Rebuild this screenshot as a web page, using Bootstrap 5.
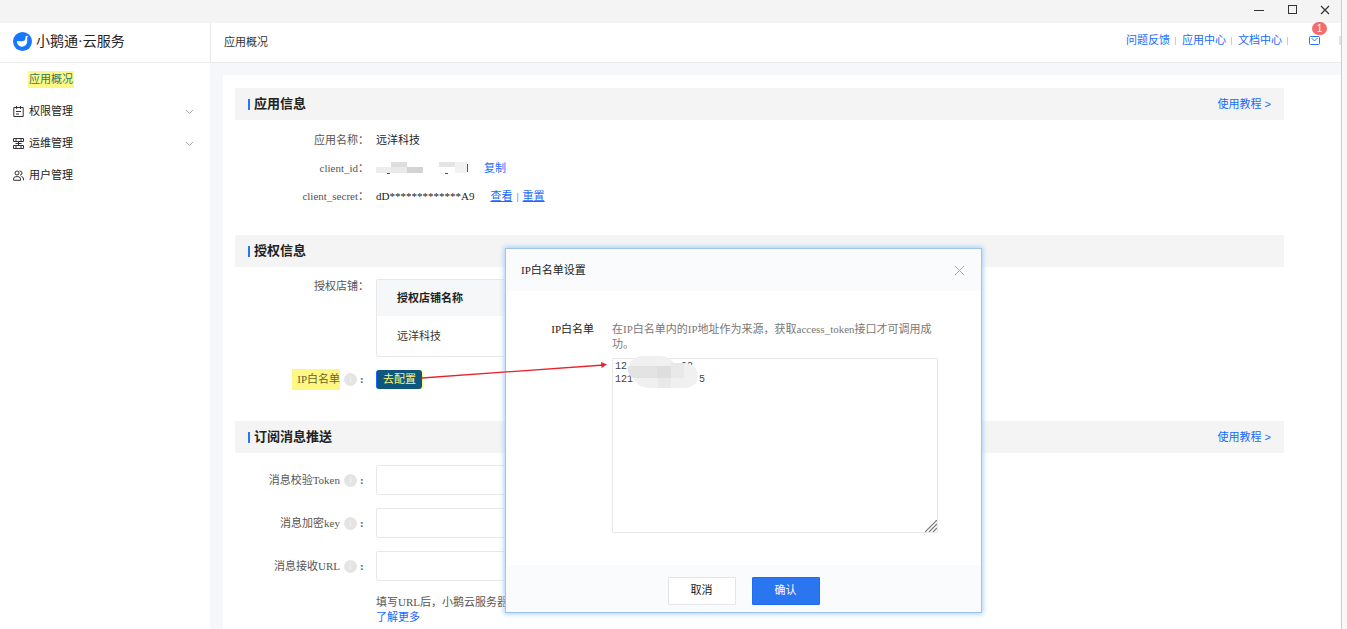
<!DOCTYPE html>
<html lang="zh-CN">
<head>
<meta charset="utf-8">
<meta name="viewport" content="width=device-width, initial-scale=1">
<title>小鹅通·云服务</title>
<link href="https://cdn.jsdelivr.net/npm/bootstrap@5.3.0/dist/css/bootstrap.min.css" rel="stylesheet">
<style>
:root{--blue:#1769ff;--line:#e8e8e8}
body{font:11px/15px "Liberation Serif","Noto Sans CJK SC",serif;color:#333;background:#f8f8f8;overflow:hidden}
a{color:var(--blue);text-decoration:none}
.window{margin-right:5px;border-right:1px solid #ccc;min-height:100vh;background:#f5f7fa}
.titlebar{height:23px;background:#f4f4f4}
.titlebar button{width:33px;height:20px;border:0;background:none;padding:0;line-height:0}
.side{width:210px;background:#fff}
.topbar{height:40px;background:#fff;border-bottom:1px solid #ebebeb}
.brand{width:211px;border-right:1px solid #e8e8e8;padding:0 0 3px 13px;font-size:14px;color:#222}
.crumb{padding-left:13px}
.toplinks{padding-bottom:4px}
.toplinks .sep{width:1px;height:8px;background:#ccc;margin:0 6px 0 5px}
.toplinks .edge{width:2px;height:9px;background:#e4e4e4;margin-left:19px}
.toplinks .mail{margin-left:15px}
.count{position:absolute;left:3px;top:-14px;width:15px;height:13px;border-radius:7px;background:#f56c6c;color:#fff;font:10px/14px "Liberation Sans",sans-serif;text-align:center}
.side a{height:32px;color:#222;padding:1px 16px 0 13px}
.side svg:first-child{margin-right:5px}
.side a.on{color:#2a7a6a;padding-left:28px}
.side mark{background:#fff783;color:inherit;padding:0 1px;line-height:17px}
.panel{background:#fff;margin:12px 0 0 13px;padding:13px 57px 12px 12px}
.bar{height:32px;background:#f4f4f4;padding:0 13px}
.bar a{font-family:"Liberation Sans","Noto Sans CJK SC",sans-serif}
.bar h2{font-size:13px;font-weight:700;line-height:16px;margin:0;color:#222}
.bar h2::before{content:"";width:2px;height:11px;background:#2a75f0;margin-right:4px}
.fields{display:grid;grid-template-columns:134px minmax(0,480px);column-gap:7px;align-items:center}
.fields dt,.fields label,.lbl{text-align:right;font-weight:400;color:#555;white-space:nowrap}
.facts{padding:6px 0 25px;grid-auto-rows:28px;margin:0}
.facts dd{margin:0;color:#222}
.facts a.u{text-decoration:underline}
.facts .bars{color:var(--blue);margin:0 4px}
.grants{padding:12px 0 31px;row-gap:12px}
.push{padding:12px 0 0;row-gap:13px}
.push .note{padding-top:1px;color:#555}
.shops{border:1px solid var(--line);border-radius:2px;border-collapse:separate;border-spacing:0;width:100%}
.shops th{background:#f6f7f9;height:36px;padding:0 20px;color:#222}
.shops td{height:40px;padding:0 20px}
.info{display:inline-block;width:13px;height:13px;border-radius:50%;background:#e4e4e4;color:#f8f8f8;font-size:9px;line-height:13px;text-align:center;vertical-align:1px;margin:0 0 0 4px}
.colon{display:inline-block;width:12px;padding-left:3px;text-align:left;font-weight:700}
.go{height:19px;width:46px;border:0;border-left:1px solid #1769ff;border-radius:3px;background:#10577d;color:#fff783;padding:0;box-shadow:1px 0 #fff783}
.hl{background:#fff783;display:inline-block;line-height:21px;padding-left:5px;color:#66622c}
.push .form-control{height:30px;border:1px solid var(--line);border-radius:2px;font-size:11px}
.dialog{position:absolute;left:505px;top:248px;width:477px;background:#fff;border:1px solid #9cc4f0;box-shadow:0 0 5px 1px #a9cdf8}
.dialog header{height:42px;background:#fafbfc;padding:0 16px 0 15px;color:#222}
.dialog header button{border:0;background:none;padding:0;line-height:0}
.dialog .content{display:grid;grid-template-columns:88px 1fr;column-gap:18px;padding:31px 43px 32px 0}
.dialog .content label{text-align:right;color:#222}
.dialog p{margin:0 0 6px;color:#777}
.dialog textarea{display:block;width:100%;height:175px;border:1px solid var(--line);border-radius:1px;padding:1px 2px;font:10px/13px "Liberation Mono",monospace;color:#444;resize:none}
.smudge{position:absolute;left:15px;top:-2px}
.grip{position:absolute;right:1px;bottom:1px}
.dialog footer{height:47px;background:#fafbfc;gap:16px;padding-top:4px}
.dialog footer button{width:68px;height:28px;border:1px solid #e4e5e8;border-radius:1px;background:#fff;color:#222;font-size:11px}
.dialog footer .ok{background:#2a75f0;border-color:#1f6cf0;color:#fff}
.arrow{position:absolute;left:420px;top:360px;pointer-events:none}
</style>
</head>
<body>
<div class="window position-relative d-flex flex-column">
  <div class="titlebar d-flex justify-content-end">
    <button aria-label="最小化"><svg width="12" height="12"><path d="M1 6.500h10" stroke="#333"/></svg></button>
    <button aria-label="最大化"><svg width="12" height="12"><rect x="2.500" y="1.500" width="8" height="8" fill="none" stroke="#333"/></svg></button>
    <button aria-label="关闭"><svg width="12" height="12"><path d="M2 2l8 8M10 2l-8 8" stroke="#333" stroke-width="1.200"/></svg></button>
  </div>
  <header class="topbar d-flex">
    <div class="brand d-flex align-items-center"><svg width="19" height="19" viewBox="0 0 19 19"><circle cx="9.500" cy="9.500" r="9.500" fill="#1677ff"/><path d="M3.800 9.300h4.700q4 0 4-3.500V5q0-1.200 1.200-1.200l1.500.7-1 .9v4.200a5.200 5.200 0 0 1-10.400-.3z" fill="#fff"/></svg><span class="ps-1">小鹅通·云服务</span></div>
    <div class="crumb d-flex align-items-center flex-grow-1">应用概况</div>
    <nav class="toplinks d-flex align-items-center">
      <a href="#">问题反馈</a><span class="sep"></span><a href="#">应用中心</a><span class="sep"></span><a href="#">文档中心</a><span class="sep"></span>
      <a href="#" class="mail position-relative lh-1" aria-label="消息"><svg class="d-block" width="11" height="9" viewBox="0 0 11 9" fill="none" stroke="#2a75f0"><rect x=".5" y=".5" width="10" height="8" rx="1"/><path d="M2.500 2l3 3 3-3"/></svg><span class="count">1</span></a><span class="edge"></span>
    </nav>
  </header>
  <div class="d-flex flex-grow-1">
    <nav class="side flex-shrink-0">
      <a class="on d-flex align-items-center" href="#"><mark>应用概况</mark></a>
      <a class="d-flex align-items-center" href="#"><svg width="11" height="11" viewBox="0 0 11 11" fill="none" stroke="#333"><path d="M3 1.500H.8v9h9.400v-9H8M4 1.500h3M3.500 0v3M7.500 0v3M3 5.500h5M3 8h3"/></svg><span class="flex-grow-1">权限管理</span><svg width="9" height="6" fill="none" stroke="#aaa"><path d="M1 1l3.500 3.500L8 1"/></svg></a>
      <a class="d-flex align-items-center" href="#"><svg width="11" height="11" viewBox="0 0 11 11" fill="none" stroke="#333"><path d="M.5.5h10v3H.5zM.5 7.500h10v3H.5zM2.500 5.500h6M5.500 3.500v4M2 2h2M7 2h2M2 9h2M7 9h2"/></svg><span class="flex-grow-1">运维管理</span><svg width="9" height="6" fill="none" stroke="#aaa"><path d="M1 1l3.500 3.500L8 1"/></svg></a>
      <a class="d-flex align-items-center" href="#"><svg width="11" height="11" viewBox="0 0 11 11" fill="none" stroke="#333"><circle cx="4" cy="3" r="2"/><path d="M.6 10.300V9q0-2.300 2.300-2.300h2.300q2.300 0 2.300 2.300v1.300zM6.500 1q2.500 0 2.500 2T7 5.200M8.500 6.500q2 .3 2 2.500v1.300"/></svg><span>用户管理</span></a>
    </nav>
    <main class="flex-grow-1 d-flex flex-column">
      <div class="panel flex-grow-1">
        <section>
          <div class="bar d-flex align-items-center justify-content-between"><h2 class="d-flex align-items-center">应用信息</h2><a href="#">使用教程 &gt;</a></div>
          <dl class="fields facts">
            <dt>应用名称：</dt><dd>远洋科技</dd>
            <dt>client_id：</dt><dd class="d-flex align-items-center"><svg width="92" height="13"><path fill="#ededed" d="M0 5h15v6H0z"/><path fill="#dedede" d="M15 0h16v5H15z"/><path fill="#e9e9e9" d="M15 5h16v6H15z"/><path fill="#d3d3d5" d="M31 5h16v6H31z"/><path fill="#e4e4e4" d="M63 0h16v5H63z"/><path fill="#f2f2f2" d="M79 0h12v11H79z"/><path stroke="#555" d="M11 11.500h3M69 11.500h3M91.500 2v8"/></svg><a class="ps-3" href="#">复制</a></dd>
            <dt>client_secret：</dt><dd>dD*************A9<a class="u ms-3" href="#">查看</a><span class="bars">|</span><a class="u" href="#">重置</a></dd>
          </dl>
        </section>
        <section>
          <div class="bar d-flex align-items-center"><h2 class="d-flex align-items-center">授权信息</h2></div>
          <div class="fields grants">
            <span class="lbl align-self-start">授权店铺：</span>
            <table class="shops"><thead><tr><th>授权店铺名称</th></tr></thead><tbody><tr><td>远洋科技</td></tr></tbody></table>
            <span class="lbl"><span class="hl">IP白名单</span><span class="info">i</span><span class="colon">:</span></span>
            <div class="d-flex"><button class="go">去配置</button></div>
          </div>
        </section>
        <section>
          <div class="bar d-flex align-items-center justify-content-between"><h2 class="d-flex align-items-center">订阅消息推送</h2><a href="#">使用教程 &gt;</a></div>
          <div class="fields push">
            <label for="tk">消息校验Token<span class="info">i</span><span class="colon">:</span></label><input id="tk" class="form-control">
            <label for="key">消息加密key<span class="info">i</span><span class="colon">:</span></label><input id="key" class="form-control">
            <label for="url">消息接收URL<span class="info">i</span><span class="colon">:</span></label><input id="url" class="form-control">
            <span></span><div class="note">填写URL后，小鹅云服务器<br><a href="#">了解更多</a></div>
          </div>
        </section>
      </div>
    </main>
  </div>
  <div class="dialog" role="dialog" aria-labelledby="dt">
    <header class="d-flex align-items-center justify-content-between"><span id="dt">IP白名单设置</span><button aria-label="关闭"><svg width="11" height="11"><path d="M1 1l9 9M10 1l-9 9" stroke="#aaa"/></svg></button></header>
    <div class="content">
      <label for="ips">IP白名单</label>
      <div><p>在IP白名单内的IP地址作为来源，获取access_token接口才可调用成功。</p>
        <div class="position-relative"><textarea id="ips">12         88
121           5</textarea>
        <svg class="smudge" width="72" height="33"><defs><clipPath id="blob"><path d="M14 0h20q9 1 13 7h13q11 3 11 13t-12 12H20q-9-1-13-9Q0 19 1 11T14 0z"/></clipPath></defs><g clip-path="url(#blob)"><path fill="#f0f0f0" d="M0 0h72v33H0z"/><path fill="#e3e3e3" d="M0 10h30v12H0z"/><path fill="#dedede" d="M30 10h14v12H30z"/><path fill="#e9e9e9" d="M44 7h13v15H44zM31 22h13v11H31z"/></g></svg>
        <svg class="grip" width="12" height="12"><path d="M0 12L12 0M4 12l8-8M8 12l4-4" stroke="#777" stroke-width="1.200"/></svg></div>
      </div>
    </div>
    <footer class="d-flex align-items-center justify-content-center"><button>取消</button><button class="ok">确认</button></footer>
  </div>
  <svg class="arrow" width="190" height="20"><path d="M2 18L184 5" stroke="#e8232a" stroke-width="1.300"/><path d="M187 4.500l-6-2.500.5 6z" fill="#e8232a"/></svg>
</div>
<script src="https://cdn.jsdelivr.net/npm/bootstrap@5.3.0/dist/js/bootstrap.bundle.min.js"></script>
</body>
</html>
